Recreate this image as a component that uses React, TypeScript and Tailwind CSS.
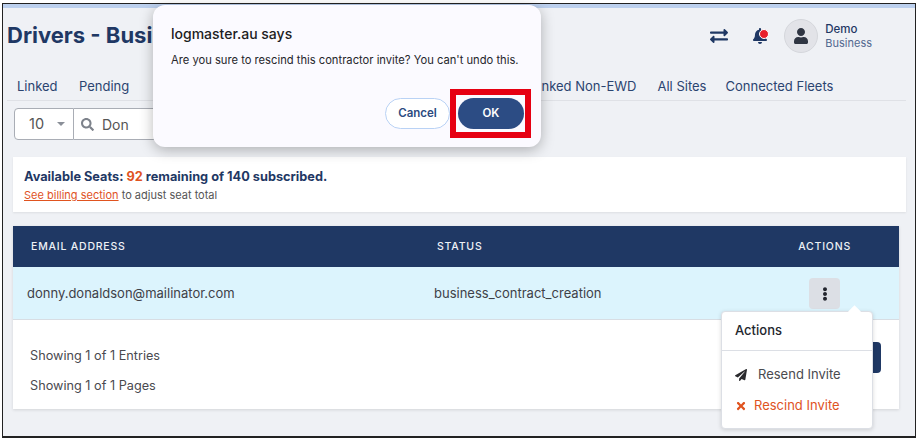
import React from "react";
import {
  FaBell,
  FaEllipsisV,
  FaExchangeAlt,
  FaPaperPlane,
  FaSearch,
  FaTimes,
  FaUser,
} from "react-icons/fa";

const ConfirmDialog: React.FC = () => (
  <div className="absolute left-[150px] top-[1px] w-[388px] h-[142px] rounded-xl bg-[#fbfaff] shadow-[0_3px_14px_rgba(0,0,0,0.28)] pl-[18px] pr-[17px] pt-[20px] font-['Inter',sans-serif]">
    <div className="text-[14px] leading-[18px] font-medium text-[#1d1d22]">logmaster.au says</div>
    <div className="mt-[9px] text-[11.2px] leading-4 text-[#26262b] whitespace-nowrap">
      Are you sure to rescind this contractor invite? You can't undo this.
    </div>
    <div className="mt-[30px] flex justify-end items-center gap-2">
      <button className="w-[65px] h-[31px] rounded-full border border-[#b9d2f5] bg-white text-[11.5px] font-semibold text-[#2c4a80]">
        Cancel
      </button>
      <div className="relative">
        <button className="w-[66px] h-[31px] rounded-full bg-[#2c4c84] text-[11.5px] font-semibold text-white">
          OK
        </button>
        <div className="absolute left-[-8px] top-[-9px] w-[81px] h-[49px] border-[6px] border-[#e60012]" />
      </div>
    </div>
  </div>
);

const ActionsMenu: React.FC = () => (
  <div className="absolute z-10 right-[-33px] top-[33px] w-[152px] h-[118px] rounded bg-white border border-[#dcdfe5] shadow-[0_1px_4px_rgba(0,0,0,0.15)]">
    <div className="absolute right-[13px] top-[-5px] w-[9px] h-[9px] rotate-45 bg-white" />
    <div className="relative h-[39px] flex items-center px-[13px] text-[13px] font-medium text-[#23262e] border-b border-[#dcdfe5]">
      Actions
    </div>
    <div className="mt-[12px] h-[24px] flex items-center px-[13px] text-[13px] text-[#4a4a4f]">
      <FaPaperPlane className="w-[12px] h-[12px] text-[#2a2a2e]" />
      <span className="ml-[11px]">Resend Invite</span>
    </div>
    <div className="mt-[7px] h-[24px] flex items-center px-[13px] text-[13px] text-[#e0531f]">
      <FaTimes className="w-[12px] h-[12px]" />
      <span className="ml-[7px]">Rescind Invite</span>
    </div>
  </div>
);

export default function App() {
  return (
    <div className="w-[919px] h-[440px] bg-white pl-[2px] pr-[3px] pt-[3px] pb-[2px] font-['Inter',sans-serif]">
      <div className="relative w-full h-full border border-[#222] border-b-2 bg-[#eff1f5]">
        <div className="h-1 bg-[#bcd0ee]" />

        {/* Header */}
        <div className="h-[45px] mt-[5px] pl-[4px] pr-[43px] flex items-center justify-between">
          <h1 className="text-[22px] font-bold text-[#1f3864] -mt-[1px]">Drivers - Business</h1>
          <div className="flex items-center">
            <FaExchangeAlt className="w-[18px] h-[18px] text-[#1f3864]" />
            <div className="relative ml-[24px]">
              <FaBell className="w-[16px] h-[16px] text-[#1f3864]" />
              <span className="absolute right-[-1px] top-[1px] w-[8px] h-[8px] rounded-full bg-[#e8202c] border border-white box-content" />
            </div>
            <div className="ml-[16px] w-[34px] h-[34px] rounded-full bg-[#e2e3e8] border border-[#d5d7dc] flex items-center justify-center">
              <FaUser className="w-[16px] h-[16px] text-[#2f3542]" />
            </div>
            <div className="ml-[7px] text-[11px] leading-[14px]">
              <div className="text-[11.5px] font-medium text-[#1f3864]">Demo</div>
              <div className="text-[#52688f]">Business</div>
            </div>
          </div>
        </div>

        {/* Tabs, the middle ones sit behind the dialog */}
        <div className="ml-[4px] mr-[9px] mt-[16px] h-[27px] pl-[10px] flex items-center gap-[21px] border-b border-[#dfe1e6] text-[13px] text-[#2b4470] whitespace-nowrap">
          <span className="w-[41px]">Linked</span>
          <span className="w-[52px]">Pending</span>
          <span className="ml-[379px]">Linked Non-EWD</span>
          <span className="w-[47px]">All Sites</span>
          <span>Connected Fleets</span>
        </div>

        {/* Page size + search */}
        <div className="ml-[11px] mt-[7px] flex h-[32px] text-[#555]">
          <div className="w-[60px] rounded-l border border-[#a9adb5] bg-white flex items-center pl-[14px] text-[14.5px]">
            10
            <span className="ml-[13px] w-0 h-0 border-x-[4px] border-x-transparent border-t-[4px] border-t-[#8a8f98]" />
          </div>
          <div className="w-[200px] border border-l-0 border-[#a9adb5] bg-white flex items-center pl-[7px] text-[14px]">
            <FaSearch className="w-[13px] h-[13px] text-[#7d828b]" />
            <span className="ml-[8px]">Don</span>
          </div>
        </div>

        {/* Seats */}
        <div className="ml-[10px] mr-[9px] mt-[17px] h-[55px] bg-white shadow-[0_1px_2px_rgba(0,0,0,0.08)] px-[11px] pt-[12px]">
          <div className="text-[12.75px] leading-4 font-bold text-[#1f3864]">
            Available Seats: <span className="text-[#e0531f]">92</span> remaining of 140 subscribed.
          </div>
          <div className="mt-[3px] text-[11px] leading-[14px] text-[#555]">
            <span className="text-[#e0531f] underline">See billing section</span> to adjust seat total
          </div>
        </div>

        {/* Table */}
        <div className="relative ml-[10px] mr-[16px] mt-[14px] bg-white shadow-[0_1px_3px_rgba(0,0,0,0.12)]">
          <div className="h-[41px] bg-[#1f3864] flex items-center text-[10.5px] font-medium tracking-[0.8px] text-[#eef1f6]">
            <div className="w-[424px] pl-[18px]">EMAIL ADDRESS</div>
            <div className="flex-1">STATUS</div>
            <div className="pr-[48px]">ACTIONS</div>
          </div>
          <div className="h-[53px] pt-[1px] bg-[#dcf4fd] border-b border-[#d8dde3] flex items-center text-[13px] text-[#3e4148]">
            <div className="w-[421px] pl-[14px]">donny.donaldson@mailinator.com</div>
            <div className="flex-1">business_contract_creation</div>
            <div className="relative mr-[59px]">
              <div className="w-[31px] h-[31px] rounded bg-[#dcdfe5] flex items-center justify-center">
                <FaEllipsisV className="w-[14px] h-[14px] text-[#23262e]" />
              </div>
              <ActionsMenu />
            </div>
          </div>
          <div className="h-[89px] relative pl-[17px] pt-[21px] text-[12.7px] leading-[30px] text-[#4a4a4f]">
            <div>Showing 1 of 1 Entries</div>
            <div>Showing 1 of 1 Pages</div>
            <div className="absolute right-[18px] top-[22px] w-[20px] h-[31px] rounded-r bg-[#1f3864]" />
          </div>
        </div>

        <ConfirmDialog />
      </div>
    </div>
  );
}
